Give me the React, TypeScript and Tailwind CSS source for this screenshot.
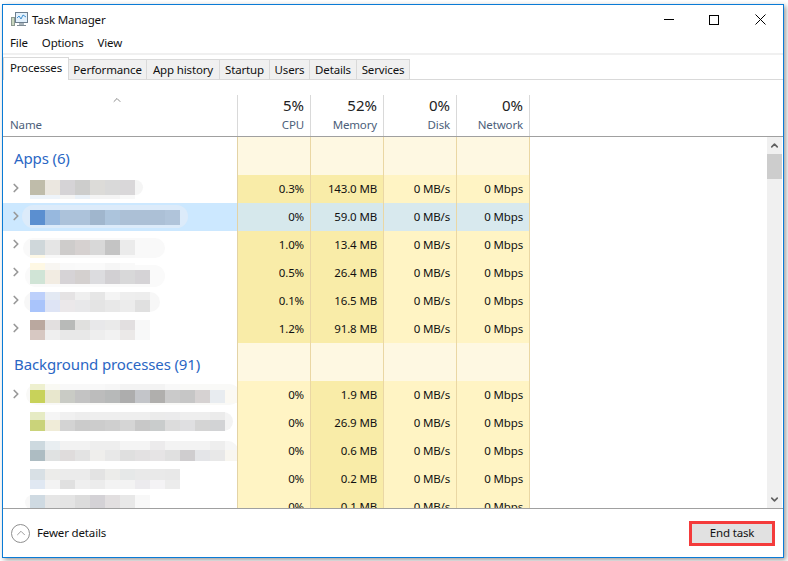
import React from "react";
import { ChevronRight, ChevronUp } from "lucide-react";

type Strip = { h: number; c: string[] };
type Halo = { x: number; y: number; w: number; h: number; color: string };
type Row = {
  cpu: string;
  mem: string;
  chevron?: boolean;
  selected?: boolean;
  cpuHot?: boolean;
  top: number;
  strips: Strip[];
  halo: Halo;
};

const tabs = ["Performance", "App history", "Startup", "Users", "Details", "Services"];
const tabWidths = ["w-[78px]", "w-[73px]", "w-[50px]", "w-[40px]", "w-[47px]", "w-[53px]"];

const apps: Row[] = [
  {
    cpu: "0.3%", mem: "143.0 MB", chevron: true, cpuHot: true, top: 5,
    strips: [
      { h: 15, c: ["#bfbcaa", "#ebe7e0", "#d5d3d6", "#cdcdcc", "#dcdbd8", "#d9d9d9", "#d9d7d9"] },
      { h: 4, c: ["#eef4fa", "#eef4fa", "#f4f4f4", "#eaf1f8", "#f4f4f4", "#f4f4f4", "#f8f8f8"] },
    ],
    halo: { x: 30, y: 5, w: 113, h: 15, color: "#f5f5f5" },
  },
  {
    cpu: "0%", mem: "59.0 MB", chevron: true, selected: true, cpuHot: true, top: 7,
    strips: [
      { h: 15, c: ["#5b8fd0", "#97b8de", "#acc2da", "#acc2da", "#a0b6cd", "#acc4dc", "#acc0d6", "#acc0d6", "#acc0d6", "#b0c4da"] },
    ],
    halo: { x: 22, y: 2, w: 166, h: 23, color: "#dcebfa" },
  },
  {
    cpu: "1.0%", mem: "13.4 MB", chevron: true, cpuHot: true, top: 9,
    strips: [
      { h: 15, c: ["#cfd7da", "#e5e5e5", "#cecccb", "#d6d1d0", "#d8d8d8", "#c4c4c4", "#ebebeb"] },
      { h: 3, c: ["#fdf8e6", "#f8f8f8", "#f8f8f8", "#f8f8f8", "#f8f8f8", "#f8f8f8", "#f8f8f8"] },
    ],
    halo: { x: 23, y: 7, w: 142, h: 20, color: "#f9f9f9" },
  },
  {
    cpu: "0.5%", mem: "26.4 MB", chevron: true, cpuHot: true, top: 4,
    strips: [
      { h: 7, c: ["#fef8e4", "#f8f6f2", "#f9f9f9", "#fafafa", "#fafafa", "#f6f6f6", "#f9f9f9"] },
      { h: 14, c: ["#d0e4d6", "#f2ece2", "#d6d3d6", "#d4d0cf", "#dcdcdf", "#d2d0d3", "#d8d8d9", "#d5d3d6"] },
    ],
    halo: { x: 25, y: 6, w: 140, h: 22, color: "#fafafa" },
  },
  {
    cpu: "0.1%", mem: "16.5 MB", chevron: true, cpuHot: true, top: 5,
    strips: [
      { h: 8, c: ["#bdd0fb", "#e3e9f3", "#e5e3e4", "#efefef", "#e6e6e6", "#f4f4f4", "#eeeeee", "#ededed"] },
      { h: 12, c: ["#a9c4fb", "#dee4f5", "#ebe8ea", "#e8e8ea", "#e4e4e4", "#e8e8e8", "#ececec", "#e0e0e0"] },
    ],
    halo: { x: 24, y: 5, w: 136, h: 20, color: "#f7f7f7" },
  },
  {
    cpu: "1.2%", mem: "91.8 MB", chevron: true, cpuHot: true, top: 5,
    strips: [
      { h: 10, c: ["#baa89f", "#e2dfdf", "#b8bab8", "#e0e0de", "#e8e8ea", "#eaeaea", "#e2dfe0", "#f8f8f8"] },
      { h: 10, c: ["#d7c8c2", "#efefef", "#e8e8e8", "#e8e8e8", "#eeeeee", "#f2f2f2", "#ebe9e8", "#f8f9f9"] },
    ],
    halo: { x: 30, y: 5, w: 120, h: 20, color: "#f8f8f8" },
  },
];

const background: Row[] = [
  {
    cpu: "0%", mem: "1.9 MB", chevron: true, top: 3,
    strips: [
      { h: 6, c: ["#eef0cf", "#f9f9f3", "#f8f8f8", "#f8f8f8", "#f8f8f8", "#f6f6f6", "#f3f3f3", "#f3f3f3", "#f3f3f3", "#f8f8f8"] },
      { h: 13, c: ["#c8d25a", "#e8e7cd", "#c9cbc5", "#c3c3c3", "#bcbcbc", "#b7b9b9", "#adadad", "#c3c5c9", "#b0afad", "#cacaca", "#c6c6c6", "#d6d2d2", "#e8ecf0", "#fbf9f3"] },
    ],
    halo: { x: 26, y: 3, w: 214, h: 21, color: "#f9f9f7" },
  },
  {
    cpu: "0%", mem: "26.9 MB", top: 3,
    strips: [
      { h: 8, c: ["#e6ebc4", "#f5f5f5", "#f0f0f0", "#ededed", "#eeeeee", "#eeeeee", "#eeeeee", "#eeeeee", "#ebebeb", "#ebebec", "#eeeeee", "#eeeeee", "#ebebeb"] },
      { h: 11, c: ["#cad37a", "#f0ecd8", "#d3d3d3", "#cbcbcb", "#cccccc", "#cfcfcf", "#d5d5d5", "#c8c8c8", "#c9cccc", "#dcdcdc", "#dfdfe1", "#d4d4d4", "#d2d3d5"] },
    ],
    halo: { x: 30, y: 3, w: 203, h: 19, color: "#f3f3f3" },
  },
  {
    cpu: "0%", mem: "0.6 MB", top: 4,
    strips: [
      { h: 9, c: ["#cdd9df", "#e9eef1", "#f2f2f2", "#f2f2f2", "#eeeeee", "#eeeeee", "#f4f4f4", "#f4f4f4", "#ecebec", "#f3f3f3", "#f3f3f3", "#f3f3f3", "#eeeeee"] },
      { h: 11, c: ["#adbcc2", "#e0e2e2", "#dfdcdc", "#e3e3e3", "#efeeec", "#e8e8e8", "#dfdfdf", "#e3e1e2", "#e6e4e5", "#e0e0e0", "#cfcdcf", "#e4e5e8", "#e8e8e8", "#f8f6f0"] },
    ],
    halo: { x: 30, y: 4, w: 208, h: 20, color: "#f6f6f6" },
  },
  {
    cpu: "0%", mem: "0.2 MB", top: 4,
    strips: [
      { h: 11, c: ["#d8e0e5", "#ececea", "#ebebeb", "#ebebeb", "#e3e3e3", "#ececea", "#e6e8e8", "#e9e9e9", "#e9e9e9", "#e8e8e8"] },
      { h: 9, c: ["#e0e8f2", "#f3f3f3", "#e0e0e0", "#efefef", "#ececec", "#f3f3f3", "#f3f3f3", "#ecebee", "#f4f3f5", "#ececec"] },
    ],
    halo: { x: 30, y: 4, w: 150, h: 20, color: "#fafafa" },
  },
  {
    cpu: "0%", mem: "0.1 MB", top: 2,
    strips: [
      { h: 15, c: ["#cfdae2", "#e6e6e6", "#e4e4e4", "#dcdcdc", "#d4d2d6", "#e2dfe0", "#e8e8e8", "#f8f8f8"] },
    ],
    halo: { x: 25, y: 2, w: 120, h: 15, color: "#f8f8f8" },
  },
];

const AppIcon = () => (
  <svg width="17" height="15" viewBox="0 0 17 15" className="mr-[4px] shrink-0">
    <rect x="0.5" y="5.5" width="3" height="8" fill="#c9d6bf" stroke="#8d9a90" />
    <rect x="4.5" y="0.5" width="12" height="10" fill="#e2f0fb" stroke="#6d7f8f" />
    <path d="M6 6 L8 4 L10 7 L12 3 L15 5" fill="none" stroke="#3f8fd0" strokeWidth="1" />
    <rect x="8" y="11" width="5" height="2" fill="#a9b4ba" />
    <rect x="6" y="13" width="9" height="1" fill="#7f8c94" />
  </svg>
);

const Mosaic = ({ row }: { row: Row }) => (
  <div className="ml-[27px] flex flex-col" style={{ paddingTop: row.top }}>
    {row.strips.map((strip, i) => (
      <div key={i} className="flex" style={{ height: strip.h }}>
        {strip.c.map((color, j) => (
          <div key={j} className="w-[15px] shrink-0" style={{ background: color }} />
        ))}
      </div>
    ))}
  </div>
);

const HeatCell = ({ text, className }: { text: string; className: string }) => (
  <div className={`flex w-[73px] shrink-0 items-center justify-end border-r border-[#ead7a4] pr-[6px] ${className}`}>
    {text}
  </div>
);

const ProcessRow = ({ row }: { row: Row }) => {
  const sel = row.selected;
  const hot = sel ? "bg-[#d6e8ec]" : "bg-[#f9eca8]";
  const cool = sel ? "bg-[#d8e9ee]" : "bg-[#fff4c4]";
  return (
    <div className="flex h-[28px] text-[#111]">
      <div className={`relative w-[235px] shrink-0 overflow-hidden border-r border-[#e3d3a6] ${sel ? "bg-[#cce8ff]" : "bg-white"}`}>
        <div
          className="absolute rounded-full"
          style={{ left: row.halo.x - 3, top: row.halo.y, width: row.halo.w, height: row.halo.h, background: row.halo.color }}
        />
        {row.chevron && (
          <ChevronRight size={14} strokeWidth={3} className="absolute left-[6px] top-[6px] text-[#999]" />
        )}
        <div className="relative">
          <Mosaic row={row} />
        </div>
      </div>
      <HeatCell text={row.cpu} className={row.cpuHot ? hot : cool} />
      <HeatCell text={row.mem} className={hot} />
      <HeatCell text="0 MB/s" className={cool} />
      <HeatCell text="0 Mbps" className={cool} />
    </div>
  );
};

const GroupRow = ({ title }: { title: string }) => (
  <div className="flex h-[38px]">
    <div className="flex w-[235px] shrink-0 items-start border-r border-[#e3d3a6] bg-white pl-[11px] pt-[10px] text-[15px] leading-[22px] tracking-[-0.12px] text-[#2a66c4]">
      {title}
    </div>
    {[0, 1, 2, 3].map((i) => (
      <div key={i} className="w-[73px] shrink-0 border-r border-[#ead7a4] bg-[#fef8e2]" />
    ))}
  </div>
);

const HeaderCell = ({ pct, label }: { pct: string; label: string }) => (
  <div className="flex w-[73px] shrink-0 flex-col items-end border-r border-[#d9d9d9] pr-[6px]">
    <div className="text-[15px] leading-[20px] tracking-normal text-[#222]">{pct}</div>
    <div className="pt-[1px] leading-[18px] text-[#4c607a]">{label}</div>
  </div>
);

export default function App() {
  return (
    <div className="h-[561px] w-[788px] overflow-hidden bg-white pl-[2px] pt-[4px] font-['Noto_Sans',sans-serif] text-[11.5px] tracking-[-0.15px]">
      <div className="flex h-[554px] w-[782px] flex-col border border-[#0a7bd6] bg-white shadow-[2px_2px_5px_rgba(0,0,0,0.4)]">
        {/* title bar */}
        <div className="flex h-[28px] shrink-0 items-center pl-[8px] pt-[1px] text-[#111]">
          <AppIcon />
          <span>Task Manager</span>
          <div className="ml-auto flex items-center gap-[35px] pr-[17px]">
            <div className="h-px w-[10px] bg-black" />
            <div className="mr-px h-[10px] w-[10px] border border-black" />
            <svg width="11" height="11" viewBox="0 0 11 11">
              <path d="M0.5 0.5 L10.5 10.5 M10.5 0.5 L0.5 10.5" stroke="#000" strokeWidth="1" fill="none" />
            </svg>
          </div>
        </div>

        {/* menu */}
        <div className="flex h-[20px] shrink-0 items-center gap-[14px] pl-[7px] text-[#111]">
          <span>File</span>
          <span>Options</span>
          <span>View</span>
        </div>
        <div className="h-[2px] shrink-0 bg-[#f0f0f0]" />

        {/* tabs */}
        <div className="relative flex h-[25px] shrink-0 items-end border-b border-[#d9d9d9]">
          <div className="relative z-10 -mb-px flex h-[23px] w-[66px] items-center justify-center border border-b-0 border-[#d9d9d9] bg-white pb-[3px] text-[#111]">
            Processes
          </div>
          {tabs.map((tab, i) => (
            <div
              key={tab}
              className={`flex h-[20px] items-center justify-center border-r border-t border-[#d9d9d9] bg-[#f0f0f0] text-[#111] ${tabWidths[i]}`}
            >
              {tab}
            </div>
          ))}
        </div>

        {/* column headers */}
        <div className="flex h-[57px] shrink-0 border-b border-[#a0a0a0] pt-[15px]">
          <div className="relative flex w-[235px] shrink-0 items-end border-r border-[#d9d9d9] pb-[2px] pl-[7px] text-[#4c607a]">
            <ChevronUp size={12} strokeWidth={1.5} className="absolute left-[108px] top-[-1px] text-[#666]" />
            <span className="leading-[18px]">Name</span>
          </div>
          <HeaderCell pct="5%" label="CPU" />
          <HeaderCell pct="52%" label="Memory" />
          <HeaderCell pct="0%" label="Disk" />
          <HeaderCell pct="0%" label="Network" />
        </div>

        {/* process list */}
        <div className="flex h-[371px] shrink-0">
          <div className="min-w-0 flex-1 overflow-hidden">
            <GroupRow title="Apps (6)" />
            {apps.map((row, i) => (
              <ProcessRow key={i} row={row} />
            ))}
            <GroupRow title="Background processes (91)" />
            {background.map((row, i) => (
              <ProcessRow key={i} row={row} />
            ))}
          </div>
          <div className="mr-px flex w-[15px] shrink-0 flex-col items-center bg-[#f0f0f0]">
            <div className="flex h-[17px] w-full items-center justify-center">
              <ChevronUp size={11} strokeWidth={3.5} className="text-[#606060]" />
            </div>
            <div className="h-[25px] w-full bg-[#cdcdcd]" />
            <div className="mt-auto flex h-[17px] w-full items-center justify-center">
              <ChevronUp size={11} strokeWidth={3.5} className="rotate-180 text-[#606060]" />
            </div>
          </div>
        </div>

        {/* footer */}
        <div className="flex h-[49px] shrink-0 items-center border-t border-[#a0a0a0] pl-[8px] pr-[8px] text-[#111]">
          <div className="mr-[7px] flex h-[19px] w-[19px] items-center justify-center rounded-full border border-[#8f8f8f]">
            <ChevronUp size={14} strokeWidth={1.5} className="text-[#8f8f8f]" />
          </div>
          <span>Fewer details</span>
          <div className="ml-auto flex h-[25px] w-[86px] items-center justify-center border-[3px] border-[#f43b3b] bg-[#e1e1e1]">
            End task
          </div>
        </div>
      </div>
    </div>
  );
}
